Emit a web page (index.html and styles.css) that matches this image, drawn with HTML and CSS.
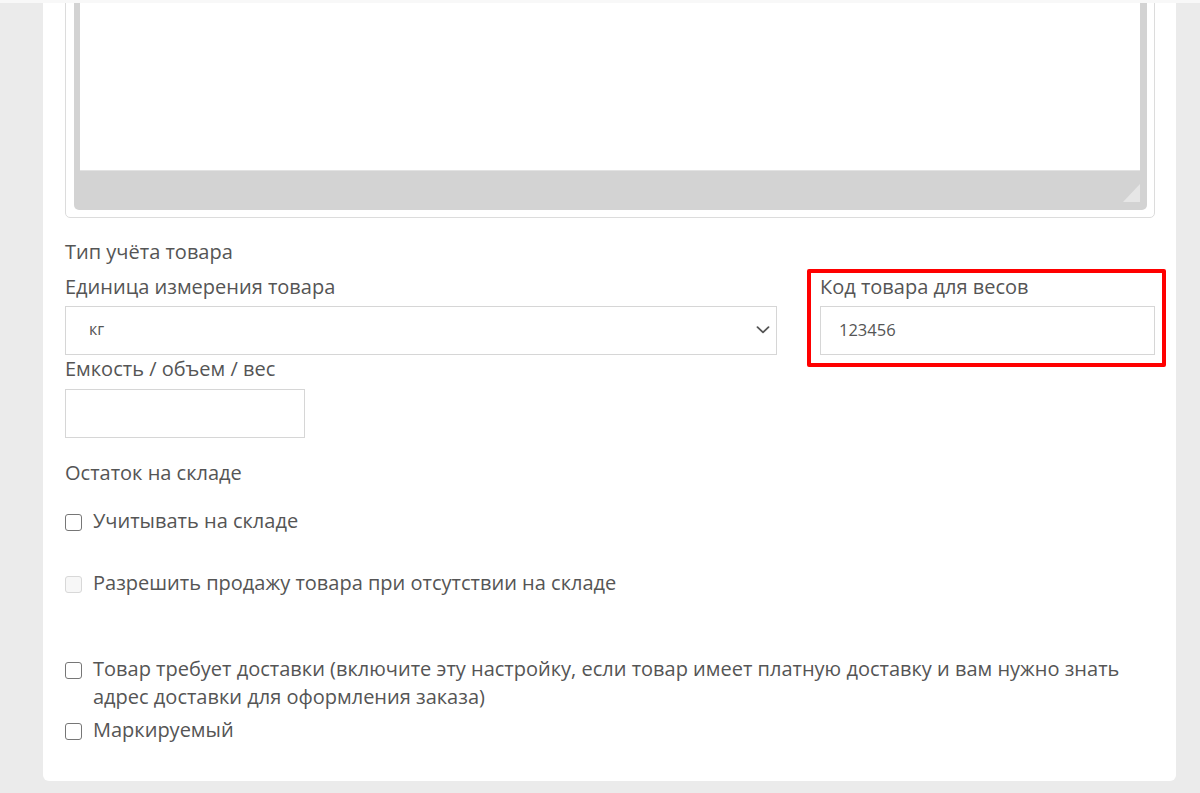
FILE: index.html
```html
<!DOCTYPE html>
<html lang="ru">
<head>
<meta charset="utf-8">
<title>Товар</title>
<link rel="stylesheet" href="styles.css">
</head>
<body>
<div class="topstrip"></div>
<div class="viewport">
  <div class="card">
    <div class="editor">
      <div class="editor-frame">
        <div class="editor-area"></div>
        <div class="editor-footer"><span class="resize"></span></div>
      </div>
    </div>

    <div class="section-title">Тип учёта товара</div>

    <div class="row">
      <div class="col">
        <div class="label">Единица измерения товара</div>
        <div class="select">
          <span class="select-value">кг</span>
          <svg class="chevron" width="14" height="8" viewBox="0 0 14 8"><path d="M1.5 1.2 L7 6.4 L12.5 1.2" fill="none" stroke="#555" stroke-width="1.8" stroke-linecap="round" stroke-linejoin="round"/></svg>
        </div>
        <div class="label">Емкость / объем / вес</div>
        <div class="input small"></div>
      </div>
      <div class="col col-right">
        <div class="label">Код товара для весов</div>
        <div class="input"><span class="input-value">123456</span></div>
        <span class="highlight"></span>
      </div>
    </div>

    <div class="section-title stock">Остаток на складе</div>

    <label class="check first"><span class="box"></span><span class="check-text">Учитывать на складе</span></label>
    <label class="check disabled second"><span class="box"></span><span class="check-text">Разрешить продажу товара при отсутствии на складе</span></label>
    <label class="check third"><span class="box"></span><span class="check-text">Товар требует доставки (включите эту настройку, если товар имеет платную доставку и вам нужно знать адрес доставки для оформления заказа)</span></label>
    <label class="check fourth"><span class="box"></span><span class="check-text">Маркируемый</span></label>
  </div>
</div>
</body>
</html>
```

FILE: styles.css
```css
html, body {
  margin: 0;
  padding: 0;
}
body {
  background: #ebebeb;
  font-family: "Open Sans", "Noto Sans", sans-serif;
  color: #555;
  font-size: 20px;
  height: 793px;
  overflow: hidden;
}
.topstrip {
  height: 3px;
  background: #f8f8f8;
}
.viewport {
  overflow: hidden;
  padding: 0 24px 0 43px;
}
.card {
  background: #fff;
  margin-top: -48px;
  border-radius: 0 0 6px 6px;
  padding: 0 21px 37px 22px;
}
.editor {
  border: 1px solid #dcdcdc;
  border-radius: 5px;
  padding: 8px 7px 7px 8px;
}
.editor-frame {
  background: #d3d3d3;
  border-radius: 5px;
  padding: 6px 7px 0 6px;
}
.editor-area {
  background: #fff;
  height: 200px;
  border-bottom: 1px solid #e2e2e2;
}
.editor-footer {
  height: 39px;
  display: flex;
  justify-content: flex-end;
  align-items: flex-start;
}
.resize {
  display: block;
  width: 17px;
  height: 18px;
  margin-top: 13px;
  background: #e6e6e6;
  clip-path: polygon(100% 0, 100% 100%, 0 100%);
}
.section-title {
  margin-top: 20px;
  line-height: 28px;
}
.row {
  display: grid;
  grid-template-columns: 712px 1fr;
  column-gap: 43px;
  margin-top: 7px;
}
.col {
  position: relative;
  min-width: 0;
}
.label {
  line-height: 28px;
}
.select {
  margin-top: 5px;
  height: 49px;
  box-sizing: border-box;
  border: 1px solid #d6d6d6;
  display: flex;
  align-items: center;
  padding: 0 6px 0 23px;
  font-size: 16px;
  color: #555;
}
.select-value {
  flex: 1;
  padding-bottom: 3px;
}
.chevron {
  display: block;
  margin-top: -2px;
}
.input {
  margin-top: 5px;
  height: 49px;
  box-sizing: border-box;
  border: 1px solid #d6d6d6;
  display: flex;
  align-items: center;
  padding: 0 18px;
  font-size: 16.5px;
}
.input-value {
  padding-bottom: 2px;
}
.input.small {
  width: 240px;
  height: 49px;
  margin-top: 6px;
}
.highlight {
  position: absolute;
  left: -13px;
  right: -11px;
  top: -4px;
  height: 98px;
  border: 4px solid #ff0000;
  border-radius: 2px;
  box-sizing: border-box;
  pointer-events: none;
}
.section-title.stock {
  margin-top: 21px;
}
.check {
  display: flex;
  align-items: flex-start;
  line-height: 28px;
}
.check-text {
  flex: 1;
  min-width: 0;
}
.box {
  flex: none;
  display: block;
  width: 17px;
  height: 17px;
  box-sizing: border-box;
  border: 1.4px solid #767676;
  border-radius: 3px;
  background: #fff;
  margin: 7px 11px 0 0;
}
.check.disabled .box {
  border-color: #d8d8d8;
  background: #f7f7f7;
}
.check.first {
  margin-top: 20px;
}
.check.second {
  margin-top: 34px;
}
.check.third {
  margin-top: 58px;
}
.check.fourth {
  margin-top: 5px;
}
```
